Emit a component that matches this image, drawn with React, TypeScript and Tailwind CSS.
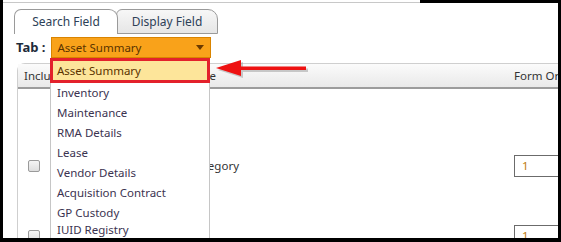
const font = "font-['Noto_Sans','Liberation_Sans',sans-serif]";

const options = [
  "Inventory",
  "Maintenance",
  "RMA Details",
  "Lease",
  "Vendor Details",
  "Acquisition Contract",
  "GP Custody",
];

const rows = [
  { name: "Asset Category", order: "1" },
  { name: "Status", order: "1" },
];

function Checkbox() {
  return <div className="w-[12px] h-[12px] rounded-[2px] border border-[#9a9a9a] bg-gradient-to-b from-[#f4f4f4] to-[#dedede]" />;
}

export default function App() {
  return (
    <div className={`relative w-[561px] h-[242px] overflow-hidden bg-white border-l-[3px] border-r-[3px] border-b-[4px] border-black text-[11.5px] text-[#333] ${font}`}>
      {/* top edge */}
      <div className="flex h-[3px]">
        <div className="w-[417px] border-b border-[#c8c8c8]" />
        <div className="flex-1 bg-black" />
      </div>

      {/* tabs */}
      <div className="flex pl-[11px] pt-[6px] h-[31px]">
        <div className="w-[104px] h-[25px] flex items-center justify-center rounded-tl-[7px] rounded-tr-[9px] border border-b-0 border-[#9a9a9a] bg-white text-[#2d4157] text-[12px] z-10">
          Search Field
        </div>
        <div className="-ml-[2px] w-[102px] h-[25px] flex items-center justify-center rounded-tl-[6px] rounded-tr-[10px] border border-[#9a9a9a] bg-gradient-to-b from-[#f7f7f7] to-[#e6e6e6] text-[#2d4157] text-[12px]">
          Display Field
        </div>
      </div>

      {/* Tab select */}
      <div className="flex items-center gap-[5px] pl-[13px] mt-[3px]">
        <span className="font-bold text-[13px] text-[#1d2b3a]">Tab :</span>
        <div className="w-[160px] h-[21px] flex items-center justify-between px-[6px] bg-[#f9a21a] border border-[#d98400] text-[#5a3300]">
          <span>Asset Summary</span>
          <span className="w-0 h-0 border-l-[4px] border-r-[4px] border-t-[5px] border-l-transparent border-r-transparent border-t-[#6b3a00]" />
        </div>
      </div>

      {/* grid */}
      <div className="ml-[14px] mt-[5px] rounded-tl-[8px] border-l border-t border-[#cfcfcf]">
        <div className="flex h-[25px] items-center whitespace-nowrap bg-gradient-to-b from-[#fbfbfb] to-[#e9e9e9] border-b-2 border-[#9c9c9c]">
          <div className="w-[130px] shrink-0 pl-[6px]">Include</div>
          <div className="w-[359px] shrink-0 pl-[7px]">Field Name</div>
          <div className="shrink-0 pl-[7px]">Form Order</div>
        </div>
        <div className="flex flex-col pt-[42px]">
          {rows.map((r) => (
            <div key={r.name} className="flex h-[70px] items-center whitespace-nowrap">
              <div className="w-[130px] shrink-0 pl-[10px]">
                <Checkbox />
              </div>
              <div className="w-[359px] shrink-0 pl-[10px]">{r.name}</div>
              <div className="shrink-0 pl-[7px]">
                <div className="w-[60px] h-[22px] border border-[#6b6b6b] pl-[7px] flex items-center text-[#c07b10]">{r.order}</div>
              </div>
            </div>
          ))}
        </div>
      </div>

      {/* open dropdown list */}
      <div className="absolute left-[47px] top-[58px] w-[160px] h-[190px] bg-white border-l border-r border-[#c6c6c6] text-[#3b3350]">
        <div className="h-[25px] border-[3px] border-[#e3212b] -mx-[1px] bg-[#fde59a] flex items-center pl-[4px] text-[#5a3300]">
          Asset Summary
        </div>
        {options.map((o) => (
          <div key={o} className="h-[20px] flex items-center pl-[6px]">
            {o}
          </div>
        ))}
        <div className="-mt-[3px] h-[20px] flex items-center pl-[6px]">IUID Registry</div>
      </div>

      {/* pointer arrow */}
      <svg className="absolute left-[209px] top-[59px]" width="100" height="22" viewBox="0 0 100 22">
        <g transform="translate(2,2)" fill="#9a9a9a" opacity="0.5">
          <polygon points="4,9 29,1 29,17" />
          <rect x="28" y="7.5" width="66" height="3.5" />
        </g>
        <polygon points="4,9 29,1 29,17" fill="#ee1111" />
        <rect x="28" y="7.5" width="66" height="3.5" fill="#ee1111" />
      </svg>
    </div>
  );
}
